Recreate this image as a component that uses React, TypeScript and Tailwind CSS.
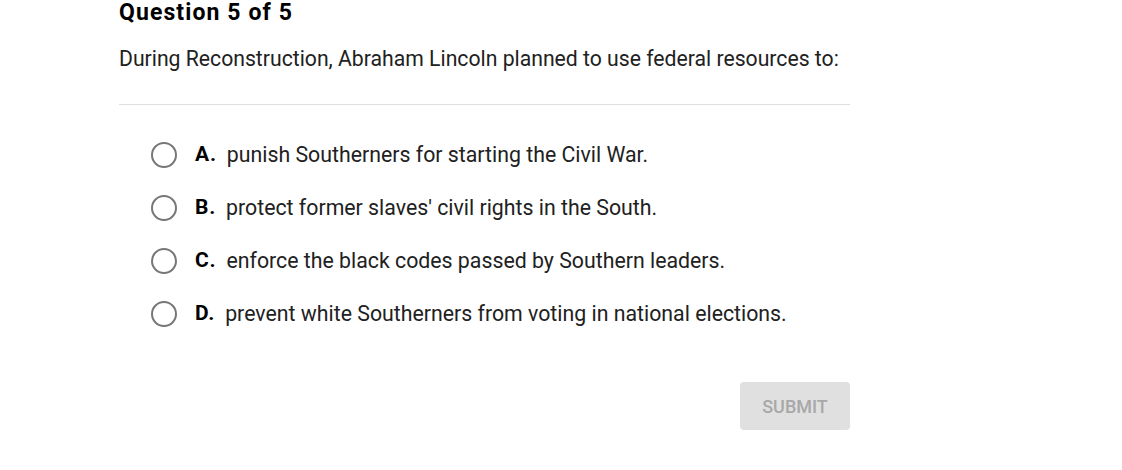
const options = [
  { letter: 'A.', text: 'punish Southerners for starting the Civil War.' },
  { letter: 'B.', text: "protect former slaves' civil rights in the South." },
  { letter: 'C.', text: 'enforce the black codes passed by Southern leaders.' },
  { letter: 'D.', text: 'prevent white Southerners from voting in national elections.' },
]

export default function App() {
  return (
    <div className="min-h-[470px] bg-white font-['Roboto',sans-serif] text-[#212121]">
      <div className="ml-[119px] w-[731px]">
        <h1 className="text-[23px] leading-[25px] font-bold tracking-[1.1px] text-black">Question 5 of 5</h1>
        <p className="mt-[20px] text-[21.2px] leading-[28px]">
          During Reconstruction, Abraham Lincoln planned to use federal resources to:
        </p>
        <div className="mt-[31px] h-px bg-[#e0e0e0]" />
        <div className="mt-[23px] flex flex-col">
          {options.map((o) => (
            <label key={o.letter} className="flex h-[53px] items-center pl-[32px]">
              <span className="h-[26px] w-[26px] rounded-full border-[2.5px] border-[#777777]" />
              <span className="ml-[18px] text-[21px] font-bold tracking-[0.8px] text-black">{o.letter}</span>
              <span className="ml-[10px] text-[21.3px]">{o.text}</span>
            </label>
          ))}
        </div>
        <div className="mt-[42px] flex justify-end">
          <button className="h-[48px] w-[110px] rounded bg-[#e0e0e0] text-[18px] font-medium text-[#a8a8a8]">
            SUBMIT
          </button>
        </div>
      </div>
    </div>
  )
}
